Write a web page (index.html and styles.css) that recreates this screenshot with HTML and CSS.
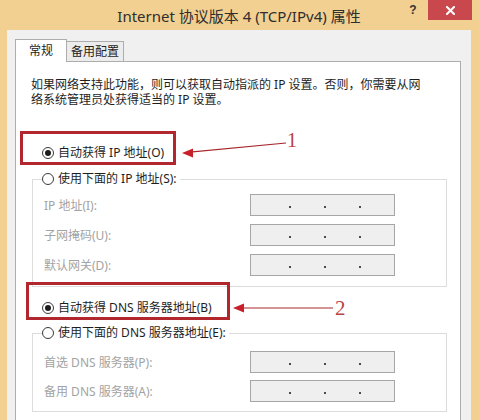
FILE: index.html
```html
<!DOCTYPE html>
<html lang="zh-CN">
<head>
<meta charset="utf-8">
<title>Internet 协议版本 4 (TCP/IPv4) 属性</title>
<link rel="stylesheet" href="styles.css">
</head>
<body>
<div class="window">
  <div class="titlebar">
    <div class="title">Internet 协议版本 4 (TCP/IPv4) 属性</div>
    <div class="help">?</div>
    <div class="close">
      <svg width="9" height="9" viewBox="0 0 9 9"><path d="M1 1L8 8M8 1L1 8" stroke="#fff" stroke-width="2" stroke-linecap="square"/></svg>
    </div>
  </div>
  <div class="client">
    <div class="tabs">
      <div class="tab active">常规</div>
      <div class="tab">备用配置</div>
    </div>
    <div class="panel">
      <p class="desc">如果网络支持此功能，则可以获取自动指派的 IP 设置。否则，你需要从网<br>络系统管理员处获得适当的 IP 设置。</p>

      <div class="radio-row mark1">
        <span class="radio checked"></span><span>自动获得 IP 地址(O)</span>
        <div class="frame frame1"></div>
        <svg class="arrow arrow1" width="110" height="22" viewBox="0 0 110 22">
          <path d="M10 14.2L106 5" stroke="#a8262b" stroke-width="1.2" fill="none"/>
          <polygon points="2,15 13,10.5 13,19.5" fill="#c8202a"/>
        </svg>
        <span class="num num1">1</span>
      </div>

      <div class="group g1">
        <div class="legend"><span class="radio"></span><span>使用下面的 IP 地址(S):</span></div>
        <div class="fields f1">
          <div class="field"><span class="label">IP 地址(I):</span><span class="ipbox"><i></i><i></i><i></i></span></div>
          <div class="field"><span class="label">子网掩码(U):</span><span class="ipbox"><i></i><i></i><i></i></span></div>
          <div class="field"><span class="label">默认网关(D):</span><span class="ipbox"><i></i><i></i><i></i></span></div>
        </div>
      </div>

      <div class="radio-row mark3">
        <span class="radio checked"></span><span>自动获得 DNS 服务器地址(B)</span>
        <div class="frame frame2"></div>
        <svg class="arrow arrow2" width="104" height="16" viewBox="0 0 104 16">
          <path d="M10 8L102 8" stroke="#a8262b" stroke-width="1.2" fill="none"/>
          <polygon points="2,8 13,3.5 13,12.5" fill="#c8202a"/>
        </svg>
        <span class="num num2">2</span>
      </div>

      <div class="group g2">
        <div class="legend"><span class="radio"></span><span>使用下面的 DNS 服务器地址(E):</span></div>
        <div class="fields f2">
          <div class="field"><span class="label">首选 DNS 服务器(P):</span><span class="ipbox"><i></i><i></i><i></i></span></div>
          <div class="field"><span class="label">备用 DNS 服务器(A):</span><span class="ipbox"><i></i><i></i><i></i></span></div>
        </div>
      </div>
    </div>
  </div>
</div>
</body>
</html>
```
FILE: styles.css
```css
* { box-sizing: border-box; }
html, body {
  margin: 0;
  padding: 0;
  overflow: hidden;
}
body {
  width: 479px;
  height: 420px;
  font-family: "Noto Sans", "Noto Sans CJK SC", sans-serif;
  font-size: 12px;
  color: #1e1e1e;
}
.window {
  width: 479px;
  height: 420px;
  background: #f2d091;
}
.titlebar {
  height: 30px;
  display: flex;
  align-items: flex-start;
}
.title {
  flex: 1;
  padding-left: 78px;
  text-align: center;
  font-size: 15px;
  line-height: 32px;
  color: #2e2e2e;
  white-space: nowrap;
}
.help {
  width: 26px;
  height: 20px;
  margin-right: 2px;
  text-align: center;
  font-family: "Liberation Sans", sans-serif;
  font-weight: bold;
  font-size: 12px;
  line-height: 21px;
  color: #333;
}
.close {
  width: 44px;
  height: 20px;
  margin-right: 7px;
  background: #c9484d;
  display: flex;
  align-items: center;
  justify-content: center;
  padding-top: 1px;
}
.client {
  margin: 0 8px 0 7px;
  height: 390px;
  background: #f0f0f0;
}
.tabs {
  display: flex;
  align-items: flex-end;
  height: 31px;
  padding: 9px 0 0 8px;
}
.tab {
  height: 20px;
  width: 57px;
  border: 1px solid #adadad;
  border-left: none;
  border-bottom: none;
  background: #ececec;
  text-align: center;
  line-height: 19px;
}
.tab.active {
  position: relative;
  z-index: 1;
  width: 52px;
  height: 23px;
  margin-bottom: -1px;
  border-left: 1px solid #adadad;
  background: #fff;
  padding-top: 0;
  line-height: 21px;
}
.panel {
  position: relative;
  margin: 0 10px 0 8px;
  height: 360px;
  background: #fff;
  border: 1px solid #adadad;
  padding: 15px 13px 0 15px;
}
.desc {
  margin: 0;
  line-height: 15px;
  white-space: nowrap;
}
.radio-row {
  position: relative;
  display: flex;
  align-items: center;
  gap: 4px;
  height: 16px;
  padding-left: 11px;
  line-height: 16px;
  white-space: nowrap;
}
.mark1 { margin-top: 38px; }
.mark3 { margin-top: 13px; }
.radio {
  width: 12px;
  height: 12px;
  border: 1px solid #3a3a3a;
  border-radius: 50%;
  background: #fff;
  display: flex;
  align-items: center;
  justify-content: center;
  flex: none;
}
.radio.checked::after {
  content: "";
  width: 6px;
  height: 6px;
  border-radius: 50%;
  background: #1c1c1c;
}
.frame {
  position: absolute;
  border: 3px solid #b1272d;
  pointer-events: none;
}
.frame1 { left: -11px; top: -14px; width: 156px; height: 34px; }
.frame2 { left: -5px; top: -18px; width: 204px; height: 38px; }
.arrow { position: absolute; }
.arrow1 { left: 149px; top: -7px; }
.arrow2 { left: 200px; top: 0; }
.num {
  position: absolute;
  font-family: "Liberation Serif", serif;
  color: #b94247;
  line-height: 20px;
}
.num1 { left: 256px; top: -15px; font-size: 20px; }
.num2 { left: 304px; top: -2px; font-size: 21px; }
.group {
  margin-left: 1px;
  border: 1px solid #dcdcdc;
}
.g1 { margin-top: 18px; }
.g2 { margin-top: 17px; }
.legend {
  display: flex;
  width: fit-content;
  align-items: center;
  gap: 4px;
  height: 16px;
  line-height: 16px;
  margin: -9px 0 0 9px;
  padding-right: 3px;
  background: #fff;
  white-space: nowrap;
}
.fields {
  display: flex;
  flex-direction: column;
  padding-left: 11px;
}
.f1 { padding-top: 7px; padding-bottom: 10px; gap: 8px; }
.f2 { padding-top: 10px; padding-bottom: 9px; gap: 7px; }
.field {
  display: flex;
  align-items: center;
  height: 22px;
}
.label {
  width: 206px;
  color: #a3a3a3;
  white-space: nowrap;
}
.ipbox {
  width: 145px;
  height: 22px;
  border: 1px solid #a6a6a6;
  background: #efefef;
  display: flex;
  align-items: center;
  gap: 33px;
  padding: 4px 0 0 38px;
}
.ipbox i {
  width: 2px;
  height: 2px;
  background: #4a4a4a;
}
```
